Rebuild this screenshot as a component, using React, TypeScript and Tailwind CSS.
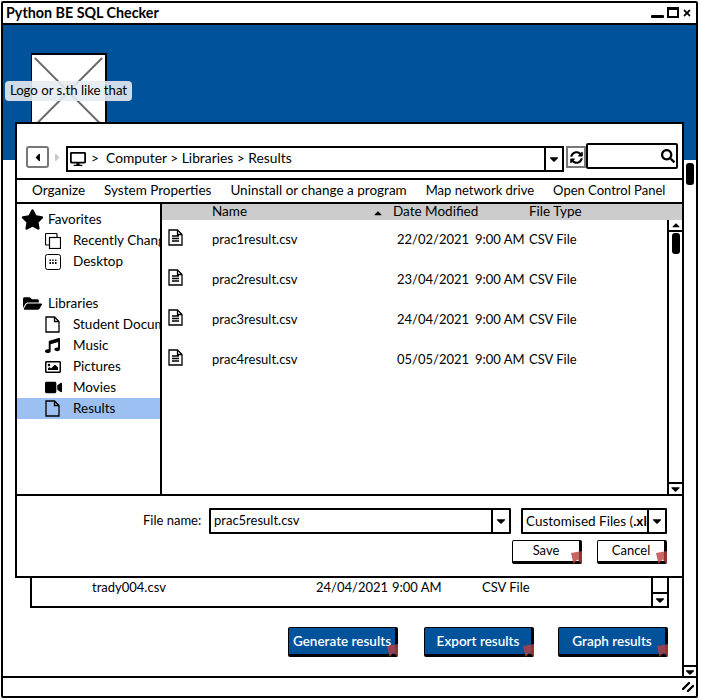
import React from "react";
import {
  FaStar,
  FaFolderOpen,
  FaMusic,
  FaRegImage,
  FaVideo,
  FaDesktop,
  FaSyncAlt,
  FaSearch,
  FaCaretDown,
  FaCaretUp,
  FaCaretLeft,
  FaCaretRight,
  FaTimes,
} from "react-icons/fa";

const files = [
  { name: "prac1result.csv", date: "22/02/2021" },
  { name: "prac2result.csv", date: "23/04/2021" },
  { name: "prac3result.csv", date: "24/04/2021" },
  { name: "prac4result.csv", date: "05/05/2021" },
];

const PageIcon = () => (
  <svg viewBox="0 0 15 17" className="w-[15px] h-[17px]" fill="none" stroke="#000" strokeWidth="1.3">
    <path d="M1 1h8.500L14 5.500V16H1z" />
    <path d="M9.500 1v4.500H14" />
  </svg>
);

const DocIcon = () => (
  <svg viewBox="0 0 15 17" className="w-[15px] h-[17px]" fill="none" stroke="#000" strokeWidth="1.3">
    <path d="M1 1h8.500L14 5.500V16H1z" />
    <path d="M9.500 1v4.500H14M4 7h7M4 9.500h7M4 12h7" />
  </svg>
);

const CloneIcon = () => (
  <svg viewBox="0 0 16 16" className="w-[16px] h-[16px]" fill="none" stroke="#000" strokeWidth="1.2">
    <path d="M4 12H1.500a1 1 0 0 1-1-1V1.500a1 1 0 0 1 1-1H11a1 1 0 0 1 1 1V4" />
    <rect x="4.500" y="4.500" width="11" height="11" fill="#fff" />
  </svg>
);

const DesktopGridIcon = () => (
  <svg viewBox="0 0 16 16" className="w-[16px] h-[16px]">
    <rect x="0.500" y="0.500" width="15" height="15" rx="2" fill="none" stroke="#000" />
    <path d="M4.500 5.500h1.500v1.500H4.500zM7.200 5.500h1.500v1.500H7.200zM10 5.500h1.500v1.500H10zM4.500 8h1.500v2H4.500zM7.200 8h1.500v2H7.200zM10 8h1.500v2H10z" />
  </svg>
);

const favorites = [
  { label: "Recently Changed", icon: <CloneIcon /> },
  { label: "Desktop", icon: <DesktopGridIcon /> },
];

const libraries = [
  { label: "Student Documents", icon: <PageIcon /> },
  { label: "Music", icon: <FaMusic size={15} /> },
  { label: "Pictures", icon: <FaRegImage size={16} /> },
  { label: "Movies", icon: <FaVideo size={17} /> },
];

const DropArrow = ({ className }: { className: string }) => (
  <div className={`flex items-center justify-center bg-white ${className}`}>
    <FaCaretDown size={14} />
  </div>
);

const Bookmark = () => (
  <svg viewBox="0 0 11 13" className="absolute right-[-3px] bottom-[-3px] w-[11px] h-[13px]">
    <path d="M0 2L11 0V13L6.500 8.500L2.500 13Z" fill="#b8403f" fillOpacity="0.8" />
  </svg>
);

const BlueButton = ({ label, className = "" }: { label: string; className?: string }) => (
  <button className={`relative w-[110px] h-[30px] bg-[#00539b] text-white border border-black border-b-[3px] border-r-[3px] rounded-[2px] text-[13.500px] font-semibold pt-[1px] ${className}`}>
    {label}
    <Bookmark />
  </button>
);

const WhiteButton = ({ label }: { label: string }) => (
  <button className="relative w-[70px] h-[24px] bg-white border border-black border-b-[3px] border-r-[3px] rounded-[2px] pb-[1px]">
    {label}
    <Bookmark />
  </button>
);

const SideRow = ({ icon, label, selected }: { icon: React.ReactNode; label: string; selected?: boolean }) => (
  <div className={`h-[21px] flex items-center whitespace-nowrap overflow-hidden ${selected ? "bg-[#9dc0f2]" : ""}`}>
    <div className="w-[56px] pl-[28px] shrink-0">{icon}</div>
    <span>{label}</span>
  </div>
);

export default function App() {
  return (
    <div className="w-[701px] h-[700px] bg-white font-['Lato','Noto_Sans',sans-serif] text-[13.500px] text-black pt-[1px] pl-[1px]">
      <div className="relative w-[697px] h-[697px] border-[2px] border-black rounded-[2px] flex flex-col overflow-hidden">
        {/* title bar */}
        <div className="h-[22px] shrink-0 border-b-[2px] border-black flex items-center justify-between pl-[3px] pr-[4px] pb-[1px]">
          <span className="font-bold text-[14.300px]">Python BE SQL Checker</span>
          <div className="flex items-center gap-[3px]">
            <div className="w-[13px] h-[3px] bg-black rounded-[1px] mt-[7px]" />
            <div className="w-[12px] h-[11px] border-[2px] border-black border-t-[3px]" />
            <FaTimes size={10} />
          </div>
        </div>

        {/* blue header */}
        <div className="h-[135px] shrink-0 bg-[#00539b] pl-[28px] pt-[28px]">
          <div className="relative w-[76px] h-[100px] bg-white border-t-[2px] border-r-[2px] border-l border-black">
            <svg viewBox="0 0 76 100" preserveAspectRatio="none" className="w-full h-full">
              <path d="M3 3L73 72M73 3L3 72" stroke="#6b6b6b" strokeWidth="2" fill="none" />
            </svg>
          </div>
        </div>

        {/* page body */}
        <div className="flex-1 flex min-h-0">
          <div className="flex-1 flex flex-col justify-end">
            <div className="ml-[27px] w-[639px] h-[30px] relative border-l-[2px] border-b-[2px] border-r-[2px] border-black flex items-center">
              <span className="absolute left-[60px] top-[0px] text-[13px]">trady004.csv</span>
              <span className="absolute left-[284px] top-[0px] text-[13px]">24/04/2021</span>
              <span className="absolute left-[360px] top-[0px] text-[13px]">9:00 AM</span>
              <span className="absolute left-[450px] top-[0px] text-[13px]">CSV File</span>
              <div className="ml-auto w-[16px] h-full border-l-[2px] border-black flex flex-col justify-end">
                <DropArrow className="h-[14px] border-t-[2px] border-black" />
              </div>
            </div>
            <div className="flex gap-[24px] justify-end pr-[14px] mt-[19px] mb-[19px]">
              <BlueButton label="Generate results" className="mr-[2px]" />
              <BlueButton label="Export results" />
              <BlueButton label="Graph results" />
            </div>
          </div>
          <div className="w-[14px] shrink-0 border-l-[2px] border-black flex flex-col justify-between">
            <div className="w-[8px] h-[22px] bg-black rounded-[3px] mx-auto mt-[3px]" />
            <DropArrow className="h-[11px] border-t-[2px] border-black" />
          </div>
        </div>

        {/* status bar */}
        <div className="h-[20px] shrink-0 border-t-[2px] border-black flex items-center justify-end pr-[2px]">
          <svg viewBox="0 0 12 12" className="w-[12px] h-[12px]">
            <path d="M1 8L7 2M6 10L11 5" stroke="#000" strokeWidth="2.400" strokeLinecap="round" />
          </svg>
        </div>

        {/* logo label */}
        <div className="absolute left-[2px] top-[78px] w-[127px] h-[20px] bg-[#e6ebf0e6] rounded-[4px] flex items-center justify-center text-[13.200px] pb-[1px]">
          Logo or s.th like that
        </div>

        {/* save dialog */}
        <div className="absolute left-[12px] top-[119px] w-[669px] h-[456px] bg-white border-[2px] border-black flex flex-col">
          <div className="h-[54px] shrink-0 flex items-end pb-[6px] pl-[9px] pr-[3px]">
            <div className="w-[23px] h-[22px] border-[2px] border-[#777] rounded-[3px] flex items-center justify-center mb-[4px]">
              <FaCaretLeft size={13} />
            </div>
            <div className="w-[17px] flex items-center justify-center text-[#c4c8cc] h-[22px] mb-[4px]">
              <FaCaretRight size={13} />
            </div>
            <div className="w-[498px] h-[26px] border-[2px] border-black flex items-center pl-[2px]">
              <FaDesktop size={16} />
              <span className="ml-[5px] whitespace-pre pb-[2px] text-[13.800px]">{">  Computer > Libraries > Results"}</span>
              <DropArrow className="ml-auto w-[18px] h-full border-l-[2px] border-black" />
            </div>
            <div className="ml-[2px] w-[20px] h-[22px] border-[2px] border-[#777] flex items-center justify-center shrink-0 mb-[4px]">
              <FaSyncAlt size={13} />
            </div>
            <div className="w-[92px] h-[26px] border-[2px] border-black rounded-[2px] flex items-center justify-end pr-[1px] mb-[3px] shrink-0">
              <FaSearch size={14} />
            </div>
          </div>

          <div className="h-[26px] shrink-0 border-y-[2px] border-black flex items-center gap-[19px] pl-[15px] pb-[1px] whitespace-nowrap">
            <span>Organize</span>
            <span>System Properties</span>
            <span>Uninstall or change a program</span>
            <span className="text-[13px]">Map network drive</span>
            <span className="text-[13px]">Open Control Panel</span>
          </div>

          <div className="flex-1 flex min-h-0 border-b-[2px] border-black">
            {/* sidebar */}
            <div className="w-[145px] shrink-0 border-r-[2px] border-black overflow-hidden pt-[5px]">
              <div className="h-[21px] flex items-center">
                <div className="w-[31px] pl-[4px]"><FaStar size={23} /></div>
                <span>Favorites</span>
              </div>
              {favorites.map((f) => (
                <SideRow key={f.label} icon={f.icon} label={f.label} />
              ))}
              <div className="h-[21px]" />
              <div className="h-[21px] flex items-center">
                <div className="w-[31px] pl-[6px]"><FaFolderOpen size={19} /></div>
                <span>Libraries</span>
              </div>
              {libraries.map((l) => (
                <SideRow key={l.label} icon={l.icon} label={l.label} />
              ))}
              <SideRow icon={<PageIcon />} label="Results" selected />
            </div>

            {/* file list */}
            <div className="flex-1 flex flex-col min-w-0">
              <div className="relative h-[16px] shrink-0 bg-[#cccccc] leading-[15px]">
                <span className="absolute left-[50px]">Name</span>
                <FaCaretUp size={12} className="absolute left-[210px] top-[3px]" />
                <span className="absolute left-[231px]">Date Modified</span>
                <span className="absolute left-[367px]">File Type</span>
              </div>
              <div className="flex-1 flex min-h-0">
                <div className="flex-1 text-[13px]">
                  {files.map((f) => (
                    <div key={f.name} className="h-[40px] flex items-center pb-[1px]">
                      <div className="ml-[6px] w-[44px] shrink-0 mb-[4px]"><DocIcon /></div>
                      <span className="w-[185px]">{f.name}</span>
                      <span className="w-[78px]">{f.date}</span>
                      <span className="w-[54px]">9:00 AM</span>
                      <span>CSV File</span>
                    </div>
                  ))}
                </div>
                <div className="w-[15px] shrink-0 border-l-[2px] border-black flex flex-col justify-between">
                  <div>
                    <div className="h-[12px] border-b-[2px] border-black flex items-center justify-center">
                      <FaCaretUp size={12} />
                    </div>
                    <div className="w-[8px] h-[21px] bg-black rounded-[3px] mx-auto mt-[1px]" />
                  </div>
                  <DropArrow className="h-[12px] border-t-[2px] border-black" />
                </div>
              </div>
            </div>
          </div>

          {/* footer */}
          <div className="h-[80px] shrink-0 pt-[12px] text-[13px]">
            <div className="flex items-center h-[26px]">
              <span className="ml-[126px] w-[66px]">File name:</span>
              <div className="w-[302px] h-[26px] border-[2px] border-black rounded-[1px] flex items-center pl-[3px]">
                <span>prac5result.csv</span>
                <DropArrow className="ml-auto w-[18px] h-full border-l-[2px] border-black" />
              </div>
              <div className="ml-[10px] w-[146px] h-[26px] border-[2px] border-black rounded-[1px] flex items-center pl-[3px] whitespace-nowrap overflow-hidden">
                <span className="text-[13.500px]">Customised Files (<b>.xl</b></span>
                <DropArrow className="ml-auto w-[18px] shrink-0 h-full border-l-[2px] border-black" />
              </div>
            </div>
            <div className="flex justify-end gap-[15px] pr-[15px] mt-[6px]">
              <WhiteButton label="Save" />
              <WhiteButton label="Cancel" />
            </div>
          </div>
        </div>
      </div>
    </div>
  );
}
